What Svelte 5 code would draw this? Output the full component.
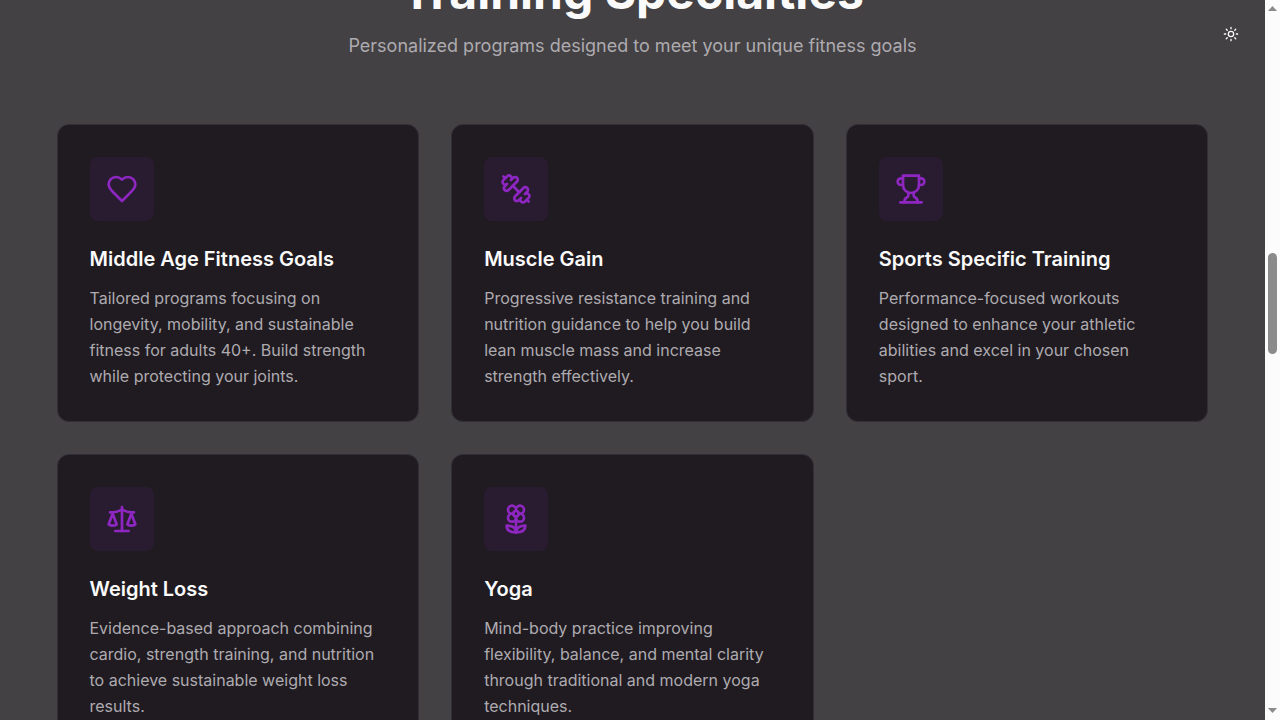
<script>
  const specialties = [
    {
      title: 'Middle Age Fitness Goals',
      text: 'Tailored programs focusing on longevity, mobility, and sustainable fitness for adults 40+. Build strength while protecting your joints.',
      paths: ['M19 14c1.49-1.46 3-3.21 3-5.5A5.5 5.5 0 0 0 16.5 3c-1.76 0-3 .5-4.5 2-1.5-1.5-2.74-2-4.5-2A5.5 5.5 0 0 0 2 8.5c0 2.3 1.5 4.05 3 5.5l7 7Z']
    },
    {
      title: 'Muscle Gain',
      text: 'Progressive resistance training and nutrition guidance to help you build lean muscle mass and increase strength effectively.',
      paths: [
        'M14.4 14.4 9.6 9.6',
        'M18.657 21.485a2 2 0 1 1-2.829-2.828l-1.767 1.768a2 2 0 1 1-2.829-2.829l6.364-6.364a2 2 0 1 1 2.829 2.829l-1.768 1.767a2 2 0 1 1 2.828 2.829z',
        'm21.5 21.5-1.4-1.4',
        'M3.9 3.9 2.5 2.5',
        'M6.404 12.768a2 2 0 1 1-2.829-2.829l1.768-1.767a2 2 0 1 1-2.828-2.829l2.828-2.828a2 2 0 1 1 2.829 2.828l1.767-1.768a2 2 0 1 1 2.829 2.829z'
      ]
    },
    {
      title: 'Sports Specific Training',
      text: 'Performance-focused workouts designed to enhance your athletic abilities and excel in your chosen sport.',
      paths: [
        'M6 9H4.5a2.5 2.5 0 0 1 0-5H6',
        'M18 9h1.5a2.5 2.5 0 0 0 0-5H18',
        'M4 22h16',
        'M10 14.66V17c0 .55-.47.98-.97 1.21C7.85 18.75 7 20.24 7 22',
        'M14 14.66V17c0 .55.47.98.97 1.21C16.15 18.75 17 20.24 17 22',
        'M18 2H6v7a6 6 0 0 0 12 0V2Z'
      ]
    },
    {
      title: 'Weight Loss',
      text: 'Evidence-based approach combining cardio, strength training, and nutrition to achieve sustainable weight loss results.',
      paths: [
        'm16 16 3-8 3 8c-.87.65-1.92 1-3 1s-2.13-.35-3-1Z',
        'm2 16 3-8 3 8c-.87.65-1.92 1-3 1s-2.13-.35-3-1Z',
        'M7 21h10',
        'M12 3v18',
        'M3 7h2c2 0 5-1 7-2 2 1 5 2 7 2h2'
      ]
    },
    {
      title: 'Yoga',
      text: 'Mind-body practice improving flexibility, balance, and mental clarity through traditional and modern yoga techniques.',
      paths: [
        'M12 5a3 3 0 1 1 3 3m-3-3a3 3 0 1 0-3 3m3-3v1M9 8a3 3 0 1 0 3 3M9 8h1m5 0a3 3 0 1 1-3 3m3-3h-1m-2 3v-1',
        'M14 8a2 2 0 1 1-4 0 2 2 0 0 1 4 0Z',
        'M12 10v12',
        'M12 22c4.2 0 7-1.667 7-5-4.2 0-7 1.667-7 5Z',
        'M12 22c-4.2 0-7-1.667-7-5 4.2 0 7 1.667 7 5Z'
      ]
    }
  ];
</script>

<div class="page">
  <main>
    <section>
      <header>
        <h2>Training Specialties</h2>
        <p>Personalized programs designed to meet your unique fitness goals</p>
      </header>
      <div class="grid">
        {#each specialties as item}
          <article>
            <div class="icon">
              <svg viewBox="0 0 24 24" aria-hidden="true">
                {#each item.paths as d}<path {d} />{/each}
              </svg>
            </div>
            <h3>{item.title}</h3>
            <p>{item.text}</p>
          </article>
        {/each}
      </div>
    </section>
    <button class="theme" type="button" aria-label="Toggle theme">
      <svg viewBox="0 0 24 24" aria-hidden="true">
        <circle cx="12" cy="12" r="4" />
        <path d="M12 2v2M12 20v2M4.93 4.93l1.41 1.41M17.66 17.66l1.41 1.41M2 12h2M20 12h2M6.34 17.66l-1.41 1.41M19.07 4.93l-1.41 1.41" />
      </svg>
    </button>
  </main>
  <div class="scrollbar" aria-hidden="true">
    <svg viewBox="0 0 15 15"><path d="M3 11h9L7.5 6Z" /></svg>
    <div class="track"><div class="thumb"></div></div>
    <svg viewBox="0 0 15 15"><path d="M3 3h9L7.5 8Z" /></svg>
  </div>
</div>

<style>
  :global(body) {
    margin: 0;
    background: #434143;
  }
  .page {
    display: grid;
    grid-template-columns: 1fr 15px;
    height: 100vh;
    overflow: hidden;
    font-family: Inter, sans-serif;
    color: #fafafa;
    background: #434143;
    -webkit-font-smoothing: antialiased;
  }
  main {
    position: relative;
    min-width: 0;
    overflow: hidden;
  }
  section {
    box-sizing: border-box;
    max-width: 1200px;
    margin: -32px auto 0;
    padding: 0 24px 96px;
  }
  header {
    margin-bottom: 64px;
    text-align: center;
  }
  h2, h3, p {
    margin: 0;
  }
  h2 {
    margin-bottom: 16px;
    font-size: 48px;
    line-height: 48px;
    font-weight: 700;
  }
  p {
    color: #aeabb0;
    font-size: 16px;
    line-height: 26px;
  }
  header p {
    font-size: 18px;
    line-height: 28px;
  }
  .grid {
    display: grid;
    grid-template-columns: repeat(auto-fill, minmax(300px, 1fr));
    gap: 32px;
  }
  article {
    padding: 32px;
    border: 1px solid #322e38;
    border-radius: 12px;
    background: #201b21;
  }
  .icon {
    display: grid;
    place-items: center;
    width: 64px;
    height: 64px;
    margin-bottom: 24px;
    border-radius: 8px;
    background: #2a1c30;
  }
  .icon svg {
    width: 32px;
    height: 32px;
    stroke: #8e27c2;
  }
  .icon svg, .theme svg {
    fill: none;
    stroke-width: 2;
    stroke-linecap: round;
    stroke-linejoin: round;
  }
  h3 {
    margin-bottom: 12px;
    font-size: 20px;
    line-height: 28px;
    font-weight: 600;
  }
  .theme {
    position: absolute;
    top: 16px;
    right: 16px;
    display: grid;
    place-items: center;
    width: 36px;
    height: 36px;
    padding: 0;
    border: 0;
    border-radius: 8px;
    background: none;
    color: inherit;
  }
  .theme svg {
    width: 16px;
    height: 16px;
    stroke: currentColor;
  }
  .scrollbar {
    display: flex;
    flex-direction: column;
    background: #fcfcfc;
  }
  .scrollbar svg {
    flex: none;
    width: 15px;
    height: 15px;
    fill: #8b8b8b;
  }
  .track {
    display: flex;
    flex: 1;
    flex-direction: column;
    align-items: center;
  }
  .track::before {
    content: '';
    flex: 238 0 0;
  }
  .track::after {
    content: '';
    flex: 351 0 0;
  }
  .thumb {
    flex: 101 0 0;
    width: 9px;
    border-radius: 5px;
    background: #8b8b8b;
  }
</style>
